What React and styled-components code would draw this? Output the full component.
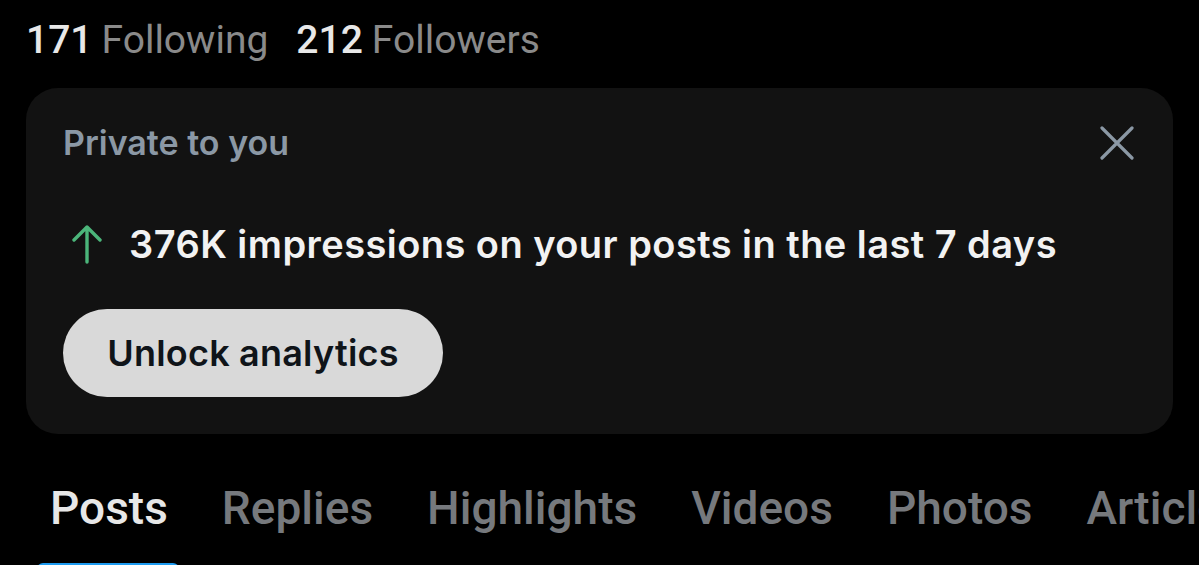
import React from 'react'
import styled, { createGlobalStyle } from 'styled-components'

const Global = createGlobalStyle`
  html, body {
    margin: 0;
    padding: 0;
    background: #000;
  }
  body {
    width: 1199px;
    height: 565px;
    overflow: hidden;
  }
`;

const Page = styled.div`
  background: #000;
  height: 565px;
  display: flex;
  flex-direction: column;
  padding-top: 14px;
  box-sizing: border-box;
  overflow: hidden;
`;

const Stats = styled.div`
  display: flex;
  gap: 28px;
  padding-left: 26px;
  font-family: Roboto, "Liberation Sans", sans-serif;
  font-size: 39px;
  line-height: 52px;
`;

const Stat = styled.span`
  color: #8a8a8a;
  b {
    color: #e8e8e8;
    font-weight: 500;
    margin-right: 9px;
  }
`;

const Card = styled.section`
  margin: 22px 26px 0;
  height: 348px;
  box-sizing: border-box;
  background: #121212;
  border-radius: 32px;
  padding: 34px 36px 0 37px;
  font-family: Inter, "Liberation Sans", sans-serif;
  display: flex;
  flex-direction: column;
`;

const CardHead = styled.div`
  display: flex;
  justify-content: space-between;
  align-items: center;
`;

const Label = styled.span`
  color: #8b98a5;
  font-size: 34px;
  font-weight: 600;
`;

const Close = styled.button`
  background: none;
  border: 0;
  padding: 0;
  width: 40px;
  height: 40px;
  display: flex;
  align-items: center;
  justify-content: center;
  cursor: pointer;
`;

const Insight = styled.div`
  display: flex;
  align-items: center;
  gap: 27px;
  margin-top: 58px;
  margin-left: 9px;
  color: #f2f2f2;
  font-size: 38px;
  font-weight: 600;
  letter-spacing: 0.45px;
  line-height: 46px;
`;

const Unlock = styled.button`
  align-self: flex-start;
  margin-top: 42px;
  width: 380px;
  height: 88px;
  border: 0;
  border-radius: 44px;
  background: #d9d9d9;
  color: #0f1419;
  font-family: Inter, "Liberation Sans", sans-serif;
  font-size: 36px;
  font-weight: 600;
  letter-spacing: 0.2px;
`;

const Tabs = styled.nav`
  display: flex;
  gap: 54px;
  margin-top: 47px;
  padding-left: 50px;
  font-family: Roboto, "Liberation Sans", sans-serif;
  font-size: 46px;
  font-weight: 500;
  white-space: nowrap;
`;

const Tab = styled.div`
  position: relative;
  color: ${p => (p.$active ? '#e7e7e7' : '#76797d')};
  padding-bottom: 30px;
  &::after {
    content: '';
    display: ${p => (p.$active ? 'block' : 'none')};
    position: absolute;
    left: -13px;
    right: -11px;
    bottom: -10px;
    height: 12px;
    border-radius: 6px;
    background: #1d9bf0;
  }
`;

const tabs = ['Posts', 'Replies', 'Highlights', 'Videos', 'Photos', 'Articles']

export default function App() {
  return (
    <Page>
      <Global />
      <Stats>
        <Stat><b>171</b>Following</Stat>
        <Stat><b>212</b>Followers</Stat>
      </Stats>
      <Card>
        <CardHead>
          <Label>Private to you</Label>
          <Close aria-label="Close">
            <svg width="34" height="34" viewBox="0 0 34 34" fill="none" stroke="#8b98a5" strokeWidth="3.2" strokeLinecap="round">
              <path d="M2 2 L32 32 M32 2 L2 32" />
            </svg>
          </Close>
        </CardHead>
        <Insight>
          <svg width="30" height="40" viewBox="0 0 30 40" fill="none" stroke="#4bb57a" strokeWidth="3.4" strokeLinecap="round" strokeLinejoin="round">
            <path d="M15 38 V3 M2 16 L15 3 L28 16" />
          </svg>
          376K impressions on your posts in the last 7 days
        </Insight>
        <Unlock>Unlock analytics</Unlock>
      </Card>
      <Tabs>
        {tabs.map((t, i) => (
          <Tab key={t} $active={i === 0}>{t}</Tab>
        ))}
      </Tabs>
    </Page>
  )
}
